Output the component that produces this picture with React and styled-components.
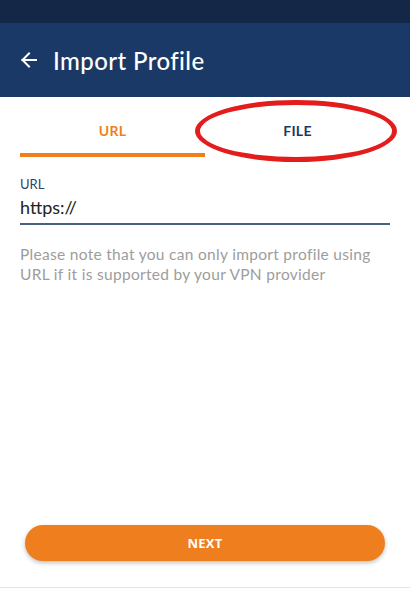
import React, { useState } from 'react';
import styled, { createGlobalStyle } from 'styled-components';

const GlobalStyle = createGlobalStyle`
  html, body {
    margin: 0;
    padding: 0;
    background: #ffffff;
  }
  * {
    box-sizing: border-box;
  }
`;

const Screen = styled.div`
  width: 410px;
  height: 600px;
  display: flex;
  flex-direction: column;
  font-family: Lato, 'Open Sans', sans-serif;
  background: #ffffff;
  overflow: hidden;
`;

const StatusBar = styled.div`
  height: 23px;
  background: #152747;
  flex-shrink: 0;
`;

const AppBar = styled.header`
  height: 74px;
  background: #1b3966;
  display: flex;
  align-items: center;
  padding: 0 20px;
  gap: 15px;
  color: #ffffff;
  flex-shrink: 0;
`;

const BackButton = styled.button`
  border: 0;
  background: none;
  padding: 0;
  color: inherit;
  display: flex;
  align-items: center;
  cursor: pointer;
`;

const Title = styled.h1`
  margin: 0;
  font-size: 24px;
  font-weight: 500;
  letter-spacing: 0.4px;
`;

const TabRow = styled.div`
  position: relative;
  display: flex;
  margin: 0 20px;
  height: 60px;
`;

const Tab = styled.button`
  flex: 1;
  border: 0;
  background: none;
  font-family: inherit;
  font-size: 14px;
  font-weight: 700;
  letter-spacing: 0.3px;
  color: ${({ active }) => (active ? '#ef7f1a' : '#1b3966')};
  border-bottom: 4px solid ${({ active }) => (active ? '#ef7f1a' : 'transparent')};
  padding: 10px 0 0;
  cursor: pointer;
`;

const Highlight = styled.div`
  position: absolute;
  left: 175px;
  top: 3px;
  width: 202px;
  height: 62px;
  border: 5px solid #e31c1c;
  border-radius: 50%;
  pointer-events: none;
`;

const Body = styled.main`
  flex: 1;
  padding: 19px 20px 0;
  display: flex;
  flex-direction: column;
`;

const FieldLabel = styled.label`
  font-size: 13px;
  color: #2c4468;
  line-height: 16px;
`;

const UrlInput = styled.input`
  margin-top: 2px;
  border: 0;
  border-bottom: 2px solid #4a6080;
  padding: 2px 0 5px;
  font-family: inherit;
  font-size: 18px;
  color: #222222;
  outline: none;
  background: none;
`;

const Note = styled.p`
  margin: 19px 0 0;
  font-size: 15.5px;
  line-height: 20px;
  color: #9d9d9d;
  letter-spacing: 0.3px;
`;

const Footer = styled.footer`
  padding: 0 25px 26px;
  border-bottom: 1px solid #e5e5e5;
  margin-bottom: 12px;
`;

const NextButton = styled.button`
  width: 100%;
  height: 36px;
  border: 0;
  border-radius: 18px;
  background: #ef7f1e;
  color: #ffffff;
  font-family: 'Open Sans', sans-serif;
  font-size: 13px;
  font-weight: 700;
  letter-spacing: 0.3px;
  box-shadow: 0 2px 4px rgba(0, 0, 0, 0.25);
  cursor: pointer;
`;

const ArrowLeft = () => (
  <svg width="18" height="18" viewBox="0 0 18 18" fill="none" stroke="currentColor" strokeWidth="2" strokeLinecap="square">
    <path d="M16 9H2.5" />
    <path d="M9 2.5L2.5 9L9 15.5" />
  </svg>
);

export default function App() {
  const [tab, setTab] = useState('url');
  const [url, setUrl] = useState('https://');

  return (
    <>
      <GlobalStyle />
      <Screen>
        <StatusBar />
        <AppBar>
          <BackButton aria-label="Back">
            <ArrowLeft />
          </BackButton>
          <Title>Import Profile</Title>
        </AppBar>
        <TabRow>
          <Tab active={tab === 'url'} onClick={() => setTab('url')}>URL</Tab>
          <Tab active={tab === 'file'} onClick={() => setTab('file')}>FILE</Tab>
          <Highlight />
        </TabRow>
        <Body>
          <FieldLabel htmlFor="url">URL</FieldLabel>
          <UrlInput id="url" value={url} onChange={(e) => setUrl(e.target.value)} />
          <Note>
            Please note that you can only import profile using URL if it is supported by your VPN provider
          </Note>
        </Body>
        <Footer>
          <NextButton>NEXT</NextButton>
        </Footer>
      </Screen>
    </>
  );
}
